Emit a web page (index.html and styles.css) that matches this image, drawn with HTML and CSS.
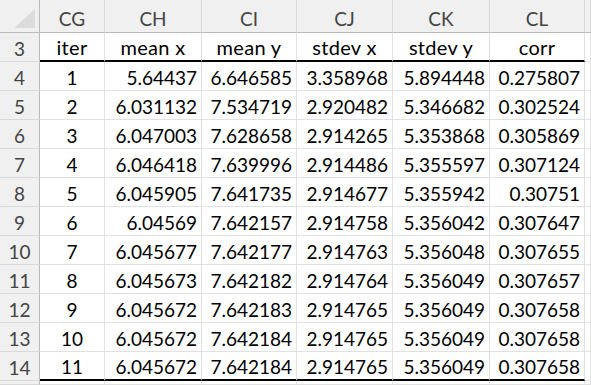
FILE: index.html
```html
<!DOCTYPE html>
<html>
<head>
<meta charset="utf-8">
<link rel="stylesheet" href="styles.css">
</head>
<body>
<div class="sheet">
  <div class="ch corner"><svg class="tri" width="21" height="19" viewBox="0 0 21 19"><polygon points="21,0 21,19 0,19" fill="#dcdcdc"/></svg></div>
  <div class="ch">CG</div><div class="ch">CH</div><div class="ch">CI</div><div class="ch">CJ</div><div class="ch">CK</div><div class="ch">CL</div><div class="ch"></div>

  <div class="rh">3</div>
  <div class="c ctr top">iter</div><div class="c ctr top">mean x</div><div class="c ctr top">mean y</div><div class="c ctr top">stdev x</div><div class="c ctr top">stdev y</div><div class="c ctr top">corr</div><div class="c"></div>

  <div class="rh">4</div>
  <div class="c ctr">1</div><div class="c">5.64437</div><div class="c">6.646585</div><div class="c">3.358968</div><div class="c">5.894448</div><div class="c">0.275807</div><div class="c"></div>
  <div class="rh">5</div>
  <div class="c ctr">2</div><div class="c">6.031132</div><div class="c">7.534719</div><div class="c">2.920482</div><div class="c">5.346682</div><div class="c">0.302524</div><div class="c"></div>
  <div class="rh">6</div>
  <div class="c ctr">3</div><div class="c">6.047003</div><div class="c">7.628658</div><div class="c">2.914265</div><div class="c">5.353868</div><div class="c">0.305869</div><div class="c"></div>
  <div class="rh">7</div>
  <div class="c ctr">4</div><div class="c">6.046418</div><div class="c">7.639996</div><div class="c">2.914486</div><div class="c">5.355597</div><div class="c">0.307124</div><div class="c"></div>
  <div class="rh">8</div>
  <div class="c ctr">5</div><div class="c">6.045905</div><div class="c">7.641735</div><div class="c">2.914677</div><div class="c">5.355942</div><div class="c">0.30751</div><div class="c"></div>
  <div class="rh">9</div>
  <div class="c ctr">6</div><div class="c">6.04569</div><div class="c">7.642157</div><div class="c">2.914758</div><div class="c">5.356042</div><div class="c">0.307647</div><div class="c"></div>
  <div class="rh">10</div>
  <div class="c ctr">7</div><div class="c">6.045677</div><div class="c">7.642177</div><div class="c">2.914763</div><div class="c">5.356048</div><div class="c">0.307655</div><div class="c"></div>
  <div class="rh">11</div>
  <div class="c ctr">8</div><div class="c">6.045673</div><div class="c">7.642182</div><div class="c">2.914764</div><div class="c">5.356049</div><div class="c">0.307657</div><div class="c"></div>
  <div class="rh">12</div>
  <div class="c ctr">9</div><div class="c">6.045672</div><div class="c">7.642183</div><div class="c">2.914765</div><div class="c">5.356049</div><div class="c">0.307658</div><div class="c"></div>
  <div class="rh">13</div>
  <div class="c ctr">10</div><div class="c">6.045672</div><div class="c">7.642184</div><div class="c">2.914765</div><div class="c">5.356049</div><div class="c">0.307658</div><div class="c"></div>
  <div class="rh">14</div>
  <div class="c ctr bot">11</div><div class="c bot">6.045672</div><div class="c bot">7.642184</div><div class="c bot">2.914765</div><div class="c bot">5.356049</div><div class="c bot">0.307658</div><div class="c"></div>

  <div class="rh"></div>
  <div class="c"></div><div class="c"></div><div class="c"></div><div class="c"></div><div class="c"></div><div class="c"></div><div class="c"></div>
</div>
</body>
</html>
```
FILE: styles.css
```css
html, body {
  margin: 0;
  padding: 0;
  background: #ffffff;
}
body {
  width: 591px;
  height: 385px;
  overflow: hidden;
}
.sheet {
  display: grid;
  height: 385px;
  overflow: hidden;
  grid-template-columns: 40px 65px 97px 95px 96px 97px 95px 1fr;
  grid-template-rows: 33px repeat(12, 29px) 1fr;
  font-family: Lato, "Liberation Sans", sans-serif;
  font-size: 19px;
  color: #000;
}
.sheet > div {
  box-sizing: border-box;
  display: flex;
  align-items: flex-end;
  white-space: nowrap;
  overflow: hidden;
}
.ch {
  background: #f0f0f0;
  color: #444;
  border-right: 1px solid #d9d9d9;
  border-bottom: 1px solid #bababa;
  justify-content: center;
  padding-bottom: 2px;
}
.corner {
  justify-content: flex-end;
  padding: 0 4px 4px 0;
  border-right: 1px solid #bababa;
}
.tri {
  display: block;
}
.rh {
  background: #f0f0f0;
  color: #444;
  border-right: 1px solid #bababa;
  border-bottom: 1px solid #d9d9d9;
  justify-content: center;
  padding-bottom: 1px;
}
.c {
  border-right: 1px solid #e1e1e1;
  border-bottom: 1px solid #e1e1e1;
  justify-content: flex-end;
  padding: 0 4px 1px 0;
}
.c.ctr {
  justify-content: center;
  padding-right: 0;
}
.c.top {
  border-bottom: 2px solid #000;
  font-size: 20px;
  letter-spacing: 0.3px;
}
.c.bot {
  border-bottom: 2px solid #000;
}
```
